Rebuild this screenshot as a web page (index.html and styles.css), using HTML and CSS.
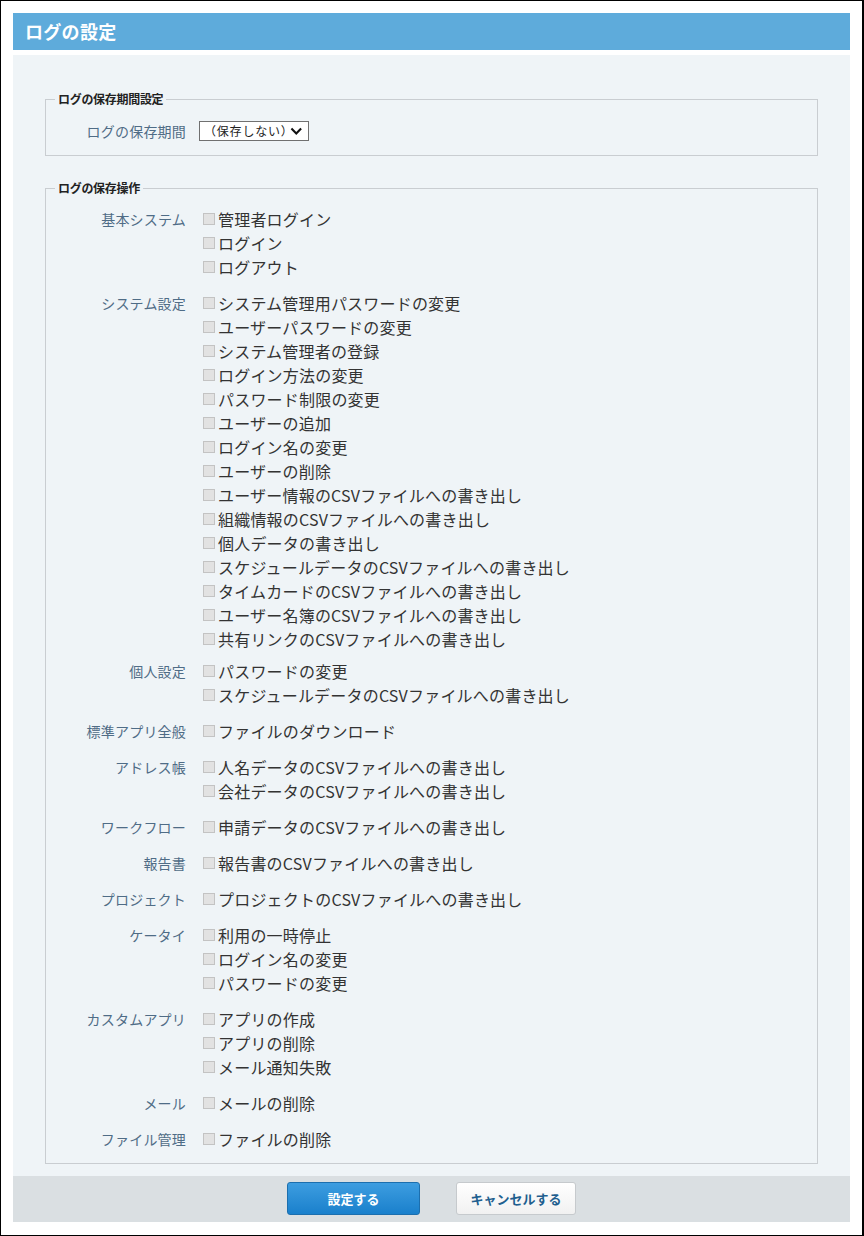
FILE: index.html
```html
<!DOCTYPE html>
<html lang="ja">
<head>
<meta charset="utf-8">
<title>ログの設定</title>
<link rel="stylesheet" href="styles.css">
</head>
<body>
<div class="page">
  <div class="header">ログの設定</div>
  <div class="panel">
    <fieldset class="box box-period">
      <legend>ログの保存期間設定</legend>
      <div class="period-row">
        <div class="label">ログの保存期間</div>
        <div class="select">
          <span class="select-text">（保存しない）</span>
          <svg class="chev" width="13" height="9" viewBox="0 0 13 9"><path d="M1.5 1.5 L6.5 6.5 L11.5 1.5" fill="none" stroke="#111" stroke-width="2.2"/></svg>
        </div>
      </div>
    </fieldset>

    <fieldset class="box box-ops">
      <legend>ログの保存操作</legend>

      <div class="group">
        <div class="label">基本システム</div>
        <ul class="items">
          <li><span class="cb"></span>管理者ログイン</li>
          <li><span class="cb"></span>ログイン</li>
          <li><span class="cb"></span>ログアウト</li>
        </ul>
      </div>

      <div class="group">
        <div class="label">システム設定</div>
        <ul class="items">
          <li><span class="cb"></span>システム管理用パスワードの変更</li>
          <li><span class="cb"></span>ユーザーパスワードの変更</li>
          <li><span class="cb"></span>システム管理者の登録</li>
          <li><span class="cb"></span>ログイン方法の変更</li>
          <li><span class="cb"></span>パスワード制限の変更</li>
          <li><span class="cb"></span>ユーザーの追加</li>
          <li><span class="cb"></span>ログイン名の変更</li>
          <li><span class="cb"></span>ユーザーの削除</li>
          <li><span class="cb"></span>ユーザー情報のCSVファイルへの書き出し</li>
          <li><span class="cb"></span>組織情報のCSVファイルへの書き出し</li>
          <li><span class="cb"></span>個人データの書き出し</li>
          <li><span class="cb"></span>スケジュールデータのCSVファイルへの書き出し</li>
          <li><span class="cb"></span>タイムカードのCSVファイルへの書き出し</li>
          <li><span class="cb"></span>ユーザー名簿のCSVファイルへの書き出し</li>
          <li><span class="cb"></span>共有リンクのCSVファイルへの書き出し</li>
        </ul>
      </div>

      <div class="group group-tight">
        <div class="label">個人設定</div>
        <ul class="items">
          <li><span class="cb"></span>パスワードの変更</li>
          <li><span class="cb"></span>スケジュールデータのCSVファイルへの書き出し</li>
        </ul>
      </div>

      <div class="group">
        <div class="label">標準アプリ全般</div>
        <ul class="items">
          <li><span class="cb"></span>ファイルのダウンロード</li>
        </ul>
      </div>

      <div class="group">
        <div class="label">アドレス帳</div>
        <ul class="items">
          <li><span class="cb"></span>人名データのCSVファイルへの書き出し</li>
          <li><span class="cb"></span>会社データのCSVファイルへの書き出し</li>
        </ul>
      </div>

      <div class="group">
        <div class="label">ワークフロー</div>
        <ul class="items">
          <li><span class="cb"></span>申請データのCSVファイルへの書き出し</li>
        </ul>
      </div>

      <div class="group">
        <div class="label">報告書</div>
        <ul class="items">
          <li><span class="cb"></span>報告書のCSVファイルへの書き出し</li>
        </ul>
      </div>

      <div class="group">
        <div class="label">プロジェクト</div>
        <ul class="items">
          <li><span class="cb"></span>プロジェクトのCSVファイルへの書き出し</li>
        </ul>
      </div>

      <div class="group">
        <div class="label">ケータイ</div>
        <ul class="items">
          <li><span class="cb"></span>利用の一時停止</li>
          <li><span class="cb"></span>ログイン名の変更</li>
          <li><span class="cb"></span>パスワードの変更</li>
        </ul>
      </div>

      <div class="group">
        <div class="label">カスタムアプリ</div>
        <ul class="items">
          <li><span class="cb"></span>アプリの作成</li>
          <li><span class="cb"></span>アプリの削除</li>
          <li><span class="cb"></span>メール通知失敗</li>
        </ul>
      </div>

      <div class="group">
        <div class="label">メール</div>
        <ul class="items">
          <li><span class="cb"></span>メールの削除</li>
        </ul>
      </div>

      <div class="group">
        <div class="label">ファイル管理</div>
        <ul class="items">
          <li><span class="cb"></span>ファイルの削除</li>
        </ul>
      </div>
    </fieldset>
  </div>
  <div class="footer">
    <button class="btn btn-primary">設定する</button>
    <button class="btn btn-secondary">キャンセルする</button>
  </div>
</div>
</body>
</html>
```

FILE: styles.css
```css
* { box-sizing: border-box; }

html, body {
  margin: 0;
  padding: 0;
  background: #ffffff;
}

body {
  font-family: "Noto Sans CJK JP", "Noto Sans", sans-serif;
  color: #333333;
}

.page {
  width: 864px;
  height: 1236px;
  border-top: 1px solid #000;
  border-left: 1px solid #000;
  border-bottom: 1px solid #000;
  border-right: 2px solid #000;
  padding: 12px 12px 0 12px;
  background: #ffffff;
}

.header {
  height: 37px;
  background: #5eabdb;
  color: #ffffff;
  font-size: 18px;
  font-weight: bold;
  line-height: 37px;
  padding-left: 12px;
  letter-spacing: 0.3px;
}

.panel {
  margin-top: 5px;
  background: #eff4f7;
  padding: 36px 32px 12px 32px;
}

.box {
  margin: 0;
  padding: 0;
  border: 1px solid #c9cdd1;
  min-width: 0;
}

.box legend {
  font-size: 12px;
  font-weight: bold;
  line-height: 16px;
  color: #222222;
  margin-left: 9px;
  padding: 0 3px 0 3px;
  letter-spacing: -0.3px;
}

.box-period {
  padding-bottom: 14px;
}

.box-ops {
  margin-top: 24px;
  padding-top: 11px;
  padding-bottom: 12px;
}

.period-row {
  display: flex;
  align-items: center;
  margin-top: 14px;
  height: 20px;
}

.label {
  width: 140px;
  flex: none;
  text-align: right;
  font-size: 14px;
  color: #4f6c86;
  letter-spacing: 0.2px;
}

.period-row .label {
  line-height: 20px;
}

.select {
  margin-left: 13px;
  width: 110px;
  height: 20px;
  border: 1px solid #707070;
  background: #ffffff;
  display: flex;
  align-items: center;
  justify-content: space-between;
  padding: 0 5px 0 4px;
}

.select-text {
  font-size: 12px;
  line-height: 18px;
  color: #222222;
  letter-spacing: 0.8px;
}

.chev {
  display: block;
}

.group {
  display: flex;
  align-items: flex-start;
}

.group + .group {
  margin-top: 12px;
}

.group.group-tight {
  margin-top: 8px;
}

.group .label {
  line-height: 24px;
}

.items {
  list-style: none;
  margin: 0 0 0 17px;
  padding: 0;
}

.items li {
  display: flex;
  align-items: center;
  height: 24px;
  font-size: 16px;
  line-height: 24px;
  color: #333333;
  white-space: nowrap;
  letter-spacing: 0.2px;
}

.cb {
  display: inline-block;
  width: 12px;
  height: 12px;
  flex: none;
  background: #e2e2e2;
  border: 1px solid #c3c3c3;
  margin-right: 3px;
}

.footer {
  height: 46px;
  background: #dadfe2;
  display: flex;
  justify-content: center;
  align-items: flex-start;
  gap: 36px;
  padding-top: 6px;
}

.btn {
  height: 33px;
  border-radius: 3px;
  font-family: "Noto Sans CJK JP", "Noto Sans", sans-serif;
  font-size: 13px;
  font-weight: bold;
  padding: 0;
  cursor: pointer;
}

.btn-primary {
  width: 133px;
  color: #ffffff;
  background: linear-gradient(#3d9de0, #1a80cc);
  border: 1px solid #1c6fae;
}

.btn-secondary {
  width: 120px;
  color: #1f5f8f;
  background: linear-gradient(#ffffff, #f1f1f1);
  border: 1px solid #c6cacd;
}
```
